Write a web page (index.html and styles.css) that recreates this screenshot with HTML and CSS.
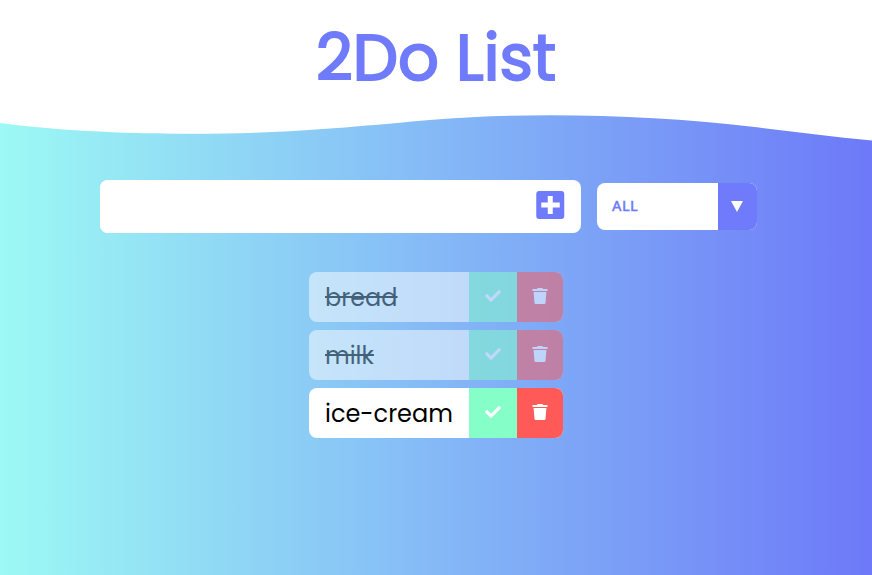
FILE: index.html
```
<!DOCTYPE html>
<html lang="en">
<head>
<meta charset="utf-8">
<title>2Do List</title>
<link rel="stylesheet" href="styles.css">
</head>
<body>
<svg width="0" height="0" class="symbols" aria-hidden="true">
  <symbol id="check" viewBox="0 0 512 512"><path d="M173.9 439.4l-166.4-166.4c-10-10-10-26.2 0-36.2l36.2-36.2c10-10 26.2-10 36.2 0L192 312.7 432.1 72.6c10-10 26.2-10 36.2 0l36.2 36.2c10 10 10 26.2 0 36.2l-294.4 294.4c-10 10-26.2 10-36.2 0z"/></symbol>
  <symbol id="trash" viewBox="0 0 16 16"><path d="M.5 1H5L5.6 0H10.4L11 1H15.5V3H.5ZM1.6 4H14.4L13.5 15Q13.4 16 12.4 16H3.6Q2.6 16 2.5 15Z"/></symbol>
</svg>
<header class="header"><h1>2Do List</h1></header>
<svg class="wave" viewBox="0 0 872 30" aria-hidden="true"><path d="M0 0H872V25.5C830 21.5 790 16.3 750 11.5C690 4.5 620 .3 550 .3C508 .3 470 1.7 436 4.6C350 12 290 18.8 190 18.8C120 18.8 50 14.8 0 8Z"/></svg>
<form class="controls">
  <div class="field">
    <input class="entry" type="text" aria-label="New item">
    <button class="add" type="button" aria-label="Add"><svg viewBox="0 0 28 28"><path fill-rule="evenodd" d="M3 0H25Q28 0 28 3V25Q28 28 25 28H3Q0 28 0 25V3Q0 0 3 0ZM11.5 5V11.5H5V16.5H11.5V23H16.5V16.5H23.5V11.5H16.5V5Z"/></svg></button>
  </div>
  <div class="filter"><span class="choice">ALL</span><span class="arrow"><svg viewBox="0 0 12 11"><path d="M0 0H12L6 11Z"/></svg></span></div>
</form>
<ul class="list">
  <li class="item done"><span class="name">bread</span><button class="complete" aria-label="Complete"><svg><use href="#check"/></svg></button><button class="remove" aria-label="Delete"><svg><use href="#trash"/></svg></button></li>
  <li class="item done"><span class="name">milk</span><button class="complete" aria-label="Complete"><svg><use href="#check"/></svg></button><button class="remove" aria-label="Delete"><svg><use href="#trash"/></svg></button></li>
  <li class="item"><span class="name">ice-cream</span><button class="complete" aria-label="Complete"><svg><use href="#check"/></svg></button><button class="remove" aria-label="Delete"><svg><use href="#trash"/></svg></button></li>
</ul>
</body>
</html>
```
FILE: styles.css
```
* { box-sizing: border-box; }
body {
  margin: 0;
  height: 575px;
  overflow: hidden;
  background: linear-gradient(to right, #9cf9f4, #6d79f8);
  font-family: Poppins, Inter, sans-serif;
}
button { border: 0; padding: 0; }
.symbols { position: absolute; }
.header { height: 115px; background: #fff; text-align: center; }
h1 {
  margin: 0;
  padding-top: 10px;
  font-size: 64px;
  line-height: 96px;
  font-weight: 400;
  color: #6f7bfa;
  -webkit-text-stroke: 2px #6f7bfa;
}
.wave { display: block; width: 872px; height: 30px; fill: #fff; }
.controls { display: flex; align-items: center; gap: 16px; margin: 35px 0 0 100px; height: 53px; }
.field { display: flex; align-items: center; width: 481px; height: 53px; background: #fff; border-radius: 8px; overflow: hidden; }
.entry { flex: 1; min-width: 0; height: 53px; border: 0; outline: 0; padding: 8px 16px; font-size: 24px; background: #fff; }
.add { width: 28.5px; height: 28px; margin: -3px 16.5px 0 0; background: none; }
.add svg { display: block; width: 28.5px; height: 28px; fill: #6f7bfa; }
.filter { display: flex; width: 160px; height: 47px; border-radius: 8px; overflow: hidden; background: #fff; }
.choice {
  width: 121px;
  padding-left: 15px;
  font: 500 14.5px/44px "Noto Sans", sans-serif;
  letter-spacing: .4px;
  color: #6f7bfa;
  -webkit-text-stroke: .3px #6f7bfa;
}
.arrow { flex: 1; display: flex; align-items: center; justify-content: center; background: #6f7bfa; }
.arrow svg { width: 12px; height: 11px; margin-right: 1px; fill: #fff; }
.list { list-style: none; display: grid; gap: 8px; width: 254px; margin: 39px 0 0 309px; padding: 0; }
.item { display: flex; height: 50px; border-radius: 8px; overflow: hidden; background: #fff; }
.done { opacity: .5; }
.name { width: 160px; padding-left: 16px; font-size: 24px; line-height: 52px; white-space: nowrap; color: #000; }
.done .name { text-decoration: line-through; }
.complete { width: 48px; background: #85ffc7; }
.remove { width: 46px; background: #ff5a58; }
.item svg { display: block; width: 16px; height: 16px; margin: -2px auto 0; fill: #fff; }
```
